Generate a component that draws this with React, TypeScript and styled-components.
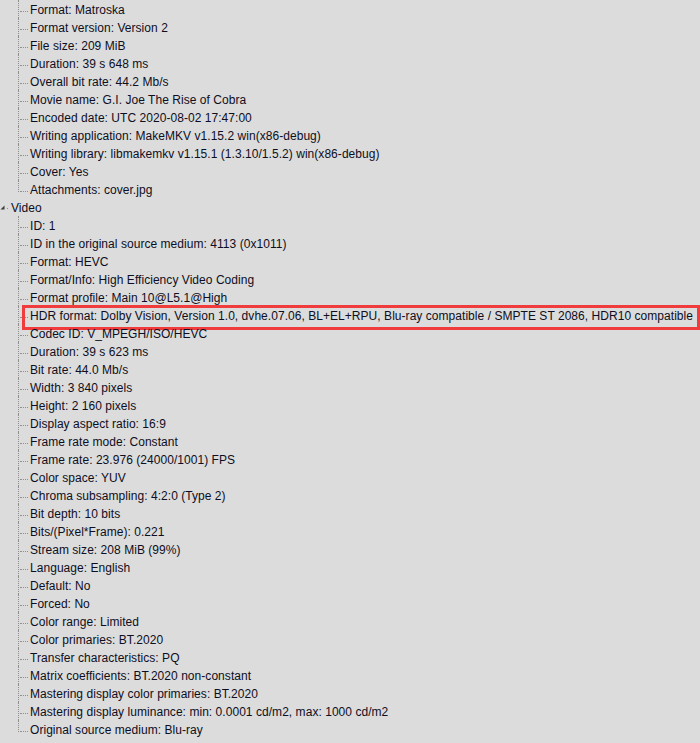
import styled, { createGlobalStyle } from "styled-components";

const general: string[] = [
  "Format: Matroska",
  "Format version: Version 2",
  "File size: 209 MiB",
  "Duration: 39 s 648 ms",
  "Overall bit rate: 44.2 Mb/s",
  "Movie name: G.I. Joe The Rise of Cobra",
  "Encoded date: UTC 2020-08-02 17:47:00",
  "Writing application: MakeMKV v1.15.2 win(x86-debug)",
  "Writing library: libmakemkv v1.15.1 (1.3.10/1.5.2) win(x86-debug)",
  "Cover: Yes",
  "Attachments: cover.jpg",
];

const video: string[] = [
  "ID: 1",
  "ID in the original source medium: 4113 (0x1011)",
  "Format: HEVC",
  "Format/Info: High Efficiency Video Coding",
  "Format profile: Main 10@L5.1@High",
  "HDR format: Dolby Vision, Version 1.0, dvhe.07.06, BL+EL+RPU, Blu-ray compatible / SMPTE ST 2086, HDR10 compatible",
  "Codec ID: V_MPEGH/ISO/HEVC",
  "Duration: 39 s 623 ms",
  "Bit rate: 44.0 Mb/s",
  "Width: 3 840 pixels",
  "Height: 2 160 pixels",
  "Display aspect ratio: 16:9",
  "Frame rate mode: Constant",
  "Frame rate: 23.976 (24000/1001) FPS",
  "Color space: YUV",
  "Chroma subsampling: 4:2:0 (Type 2)",
  "Bit depth: 10 bits",
  "Bits/(Pixel*Frame): 0.221",
  "Stream size: 208 MiB (99%)",
  "Language: English",
  "Default: No",
  "Forced: No",
  "Color range: Limited",
  "Color primaries: BT.2020",
  "Transfer characteristics: PQ",
  "Matrix coefficients: BT.2020 non-constant",
  "Mastering display color primaries: BT.2020",
  "Mastering display luminance: min: 0.0001 cd/m2, max: 1000 cd/m2",
  "Original source medium: Blu-ray",
];

const GlobalStyle = createGlobalStyle`
  html, body {
    margin: 0;
    background: #dcdcdc;
  }
  body {
    font-family: "Liberation Sans", Arial, sans-serif;
    font-size: 12px;
    letter-spacing: 0.045px;
    color: #0e0e22;
    overflow: hidden;
  }
`;

const St = {
  Tree: styled.ul`
    list-style: none;
    margin: 0;
    padding: 0;
    height: 743px;
    overflow: hidden;
  `,
  Group: styled.ul`
    list-style: none;
    margin: 0;
    padding: 0 0 0 18px;
  `,
  // child rows draw their own connector lines
  Item: styled.li<{ $last?: boolean }>`
    position: relative;
    padding-left: 12px;
    height: 18px;

    &::before {
      content: "";
      position: absolute;
      left: 2px;
      width: 8px;
      top: 11px;
      border-top: 1px dotted #8e8e8e;
    }
    &::after {
      content: "";
      position: absolute;
      left: 0;
      top: 0;
      height: ${({ $last }) => ($last ? "12px" : "18px")};
      border-left: 1px dotted #8e8e8e;
    }
  `,
  Parent: styled.li`
    position: relative;
  `,
  ParentRow: styled.div`
    display: flex;
    align-items: center;
    height: 18px;
  `,
  Expander: styled.span`
    display: flex;
    width: 5px;
    height: 18px;
    align-items: center;
    padding-top: 1px;
    box-sizing: border-box;
  `,
  Dot: styled.span`
    width: 1px;
    height: 1px;
    background: #8e8e8e;
    margin: 3px 3px 0 2px;
  `,
  Label: styled.span<{ $highlight?: boolean }>`
    display: inline-block;
    position: relative;
    top: 1px;
    line-height: 18px;
    height: 18px;
    white-space: nowrap;

    ${({ $highlight }) =>
      $highlight &&
      `
      &::after {
        content: "";
        position: absolute;
        left: -8px;
        right: -7px;
        top: -2px;
        bottom: -5px;
        border: 3px solid #f03c3c;
      }
    `}
  `,
};

function ChildList({ items }: { items: string[] }) {
  return (
    <St.Group>
      {items.map((text, i) => (
        <St.Item key={text} $last={i === items.length - 1}>
          <St.Label $highlight={text.startsWith("HDR format")}>{text}</St.Label>
        </St.Item>
      ))}
    </St.Group>
  );
}

function ExpandedArrow() {
  return (
    <svg width="5" height="5" viewBox="0 0 5 5">
      <polygon points="4.5,0.5 4.5,4.5 0.5,4.5" fill="#3c3c3c" />
    </svg>
  );
}

export default function App() {
  return (
    <>
      <GlobalStyle />
      <St.Tree>
        {/* General section header sits above the visible area */}
        <St.Parent>
          <ChildList items={general} />
        </St.Parent>
        <St.Parent>
          <St.ParentRow>
            <St.Expander>
              <ExpandedArrow />
            </St.Expander>
            <St.Dot />
            <St.Label>Video</St.Label>
          </St.ParentRow>
          <ChildList items={video} />
        </St.Parent>
      </St.Tree>
    </>
  );
}
